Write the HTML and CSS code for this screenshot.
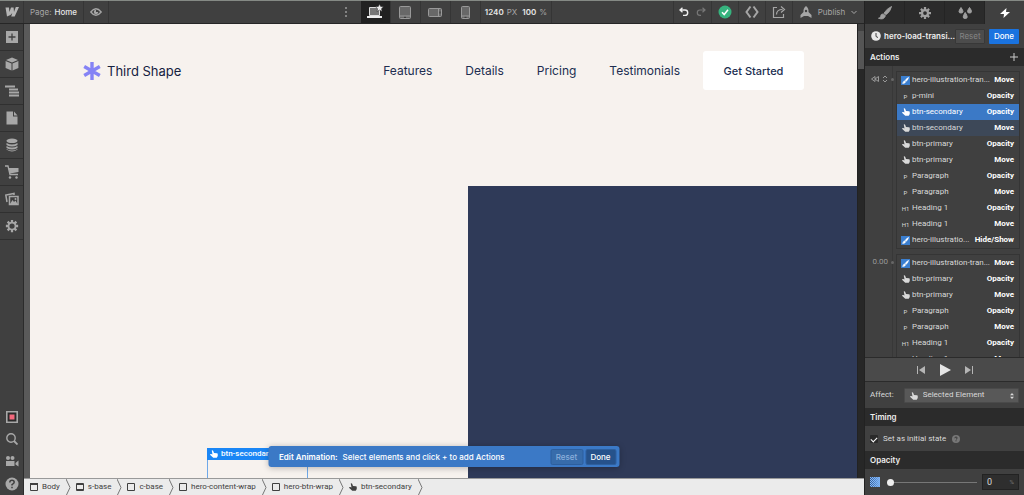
FILE: index.html
```html
<!DOCTYPE html>
<html lang="en">
<head>
<meta charset="utf-8">
<title>Designer</title>
<link rel="stylesheet" href="styles.css">
</head>
<body>
<svg class="defs" aria-hidden="true">
  <symbol id="hand" viewBox="0 0 16 16"><path d="M3.500 1q2-1 3 1L8 6l6 .5q1.500.3 1.500 2V12l-2 3.500h-7L0 9.500q.5-2 2.500-1.300L5 9z" fill="currentColor"/></symbol>
  <symbol id="brush" viewBox="0 0 16 16"><path d="M15.500.5Q10 3 7 8l2 2q5-3 6.500-9.500zM6 9Q3 9 3 12q-.5 2-2.500 2 6 2.500 8-3z" fill="currentColor" stroke="currentColor"/></symbol>
  <symbol id="gear" viewBox="0 0 16 16"><path fill="none" stroke="currentColor" stroke-width="3" d="M8 0v4M8 12v4M0 8h4M12 8h4M2.500 2.500l2.500 2.500M11 11l2.500 2.500M13.500 2.500L11 5M5 11l-2.500 2.500"/><circle cx="8" cy="8" r="4" fill="none" stroke="currentColor" stroke-width="3"/></symbol>
  <symbol id="box" viewBox="0 0 8 8"><path d="M.5.5h7v7h-7z" fill="none" stroke="currentColor"/></symbol>
  <symbol id="sep" viewBox="0 0 5 17"><path d="M0 0l4 8.500L0 17" fill="none" stroke="#777" /></symbol>
</svg>
<div class="app">
  <div class="workspace">
    <header class="topbar">
      <button class="logo" aria-label="Menu"><svg class="i14" viewBox="0 0 14 14"><path d="M14 2L9.700 11.500H6.200L7.300 8Q5.500 11 2 11.500L.5 2.500H4L4.400 7 6 2.500h2.600L9 7l1.800-5z" fill="currentColor"/></svg></button>
      <button class="page">Page: <b>Home</b></button>
      <button class="cell eye" aria-label="Preview"><svg class="i12" viewBox="0 0 12 12"><path d="M.8 6q5-6.500 10.400 0-5.400 6.500-10.400 0z" fill="none" stroke="currentColor" stroke-width="1.300"/><path d="M6 3.800a2.200 2.200 0 1 0 2.200 2.200H6z" fill="currentColor"/></svg></button>
      <span class="spacer wide"></span>
      <button class="dots" aria-label="More"><svg class="i12" viewBox="0 0 12 12"><path d="M6 1v2M6 5v2M6 9v2" stroke="currentColor" stroke-width="1.500"/></svg></button>
      <button class="device on" aria-label="Desktop"><svg class="laptop" viewBox="0 0 18 16"><path d="M3.500 3.500h10v8h-10z" fill="#777" stroke="#ddd"/><path d="M1 12h15v2H1z" fill="#eee"/><path d="M13.500 0l1.200 2.500 2.800.3-2 1.900.6 2.800-2.600-1.400-2.500 1.400.6-2.800-2-1.900 2.700-.3z" fill="#eee" stroke="#222" stroke-width=".5"/></svg></button>
      <button class="device" aria-label="Tablet"><svg class="i14" viewBox="0 0 14 14"><rect x="1.500" y="1.500" width="11" height="12" rx="1" fill="#686868" stroke="#999"/><path d="M1 11h12" stroke="#999"/><path d="M6 12.300h2" stroke="#333"/></svg></button>
      <button class="device" aria-label="Mobile landscape"><svg class="i14" viewBox="0 0 14 14"><rect x=".5" y="3.500" width="13" height="8" rx="1" fill="#686868" stroke="#999"/><path d="M10.500 3v9" stroke="#999"/><path d="M12 6.500v2" stroke="#333"/></svg></button>
      <button class="device" aria-label="Mobile portrait"><svg class="i14" viewBox="0 0 14 14"><rect x="3.500" y="1.500" width="8" height="12" rx="1" fill="#686868" stroke="#999"/><path d="M3 11h9" stroke="#999"/><path d="M6.500 12.300h2" stroke="#333"/></svg></button>
      <button class="size"><b>1240</b> PX <b class="pct">100</b> %</button>
      <span class="spacer narrow"></span>
      <div class="undo">
        <button class="lit" aria-label="Undo"><svg class="i10" viewBox="0 0 10 10"><path d="M3.500.8L1 3l2.500 2.200M1 3h5a2.700 2.700 0 0 1 0 5.400H4" fill="none" stroke="currentColor" stroke-width="1.400"/></svg></button>
        <button class="dim" aria-label="Redo"><svg class="i10" viewBox="0 0 10 10"><path d="M6.500.8L9 3 6.500 5.200M9 3H4a2.700 2.700 0 0 0 0 5.400h1" fill="none" stroke="currentColor" stroke-width="1.200"/></svg></button>
      </div>
      <button class="act" aria-label="Saved"><svg class="i14" viewBox="0 0 14 14"><circle cx="7" cy="7" r="6.500" fill="#36b37e"/><path d="M4 7.200l2.200 2.300L10 4.800" fill="none" stroke="#fff" stroke-width="1.500"/></svg></button>
      <button class="act" aria-label="Code"><svg class="i14" viewBox="0 0 14 14"><path d="M5.500 1.500L1.500 7l4 5.500M8.500 1.500l4 5.500-4 5.500" fill="none" stroke="currentColor" stroke-width="2"/></svg></button>
      <button class="act" aria-label="Share"><svg class="i14" viewBox="0 0 14 14"><path d="M5 2.500H1.500v10h10V9M4.500 9.500q0-5 6-5M9 1.500l3.500 3L9 7.500" fill="none" stroke="currentColor" stroke-width="1.200"/></svg></button>
      <button class="publish"><svg class="i12" viewBox="0 0 12 12"><path d="M6 0q3 2.500 2.500 6L11.500 9v3L8 10H4L.5 12V9l3-3Q3 2.500 6 0z" fill="currentColor"/><circle cx="6" cy="5" r="1.200" fill="#404040"/></svg><span>Publish</span><svg class="i6" viewBox="0 0 6 6"><path d="M.5 2L3 4.500 5.500 2" fill="none" stroke="currentColor"/></svg></button>
    </header>
    <div class="middle">
      <nav class="rail" aria-label="Tools">
        <button aria-label="Add"><svg class="i12" viewBox="0 0 12 12"><path d="M0 0h12v12H0z" fill="currentColor"/><path d="M6 2.500v7M2.500 6h7" stroke="#404040" stroke-width="1.300"/></svg></button>
        <button aria-label="Symbols"><svg class="i14" viewBox="0 0 14 14"><path d="M7 .5L13 3 7 5.500 1 3zM.6 4L6.500 6.500v7L.6 11zM13.400 4L7.500 6.500v7l5.900-2.500z" fill="currentColor"/></svg></button>
        <button aria-label="Navigator"><svg class="i14" viewBox="0 0 14 14"><path d="M0 2.500h10M4 5.500h9M4 8.500h10M4 11.500h10" stroke="currentColor" stroke-width="1.800"/></svg></button>
        <button aria-label="Pages"><svg class="i14" viewBox="0 0 14 14"><path d="M1.500.5H8V5.500h4.500v8h-11zM9 .5l3.500 4H9z" fill="currentColor"/></svg></button>
        <button aria-label="CMS"><svg class="i14" viewBox="0 0 14 14"><ellipse cx="7" cy="2.800" rx="5.500" ry="2.300" fill="currentColor"/><path d="M1.500 5q5.500 3 11 0v2q-5.500 3.200-11 0zM1.500 8q5.500 3 11 0v2q-5.500 3.200-11 0zM1.500 11q5.500 3 11 0v.5q-5.500 4-11 0z" fill="currentColor"/></svg></button>
        <button aria-label="Ecommerce"><svg class="i14" viewBox="0 0 14 14"><path d="M0 1h3l2 8.500h8" fill="none" stroke="currentColor" stroke-width="1.300"/><path d="M3.500 3H13.500v4L5 8.500z" fill="currentColor"/><circle cx="5" cy="12.500" r="1.200" fill="currentColor"/><circle cx="11.500" cy="12.500" r="1.200" fill="currentColor"/></svg></button>
        <button aria-label="Assets"><svg class="i14" viewBox="0 0 14 14"><path d="M2 10L.8 3 9 1.500V3" fill="none" stroke="currentColor" stroke-width="1.500"/><path d="M4.500 4.500h8.500v8H4.500z" fill="none" stroke="currentColor" stroke-width="1.500"/><path d="M5 12l2.500-4L9 10l1.500-1.500 2 3.500z" fill="currentColor"/><circle cx="10.500" cy="7" r="1" fill="currentColor"/></svg></button>
        <button aria-label="Settings"><svg class="i14" viewBox="0 0 16 16"><path fill="none" stroke="currentColor" stroke-width="2.600" d="M8 1v3M8 12v3M1 8h3M12 8h3M3 3l2 2M11 11l2 2M13 3l-2 2M5 11l-2 2"/><circle cx="8" cy="8" r="4" fill="none" stroke="currentColor" stroke-width="2"/></svg></button>
        <span class="spacer"></span>
        <button class="low" aria-label="Record"><svg class="i12" viewBox="0 0 12 12"><path d="M.8.800h10.400v10.400H.8z" fill="#2b2b2b" stroke="currentColor" stroke-width="1.600"/><path d="M3.500 3.500h5v5h-5z" fill="#f3687c"/></svg></button>
        <button class="low" aria-label="Search"><svg class="i12" viewBox="0 0 12 12"><circle cx="5" cy="5" r="4.200" fill="none" stroke="currentColor" stroke-width="1.400"/><path d="M8 8l3.500 3.500" stroke="currentColor" stroke-width="1.800"/></svg></button>
        <button class="low" aria-label="Video help"><svg class="i14" viewBox="0 0 14 14"><circle cx="3" cy="4" r="2" fill="currentColor"/><circle cx="7.500" cy="4" r="2" fill="currentColor"/><path d="M1 7h8.500v5H1zM10.500 9L13.500 6.500v6L10.500 10.500z" fill="currentColor"/></svg></button>
        <button class="low" aria-label="Help"><svg class="i14" viewBox="0 0 14 14"><circle cx="7" cy="7" r="6.500" fill="currentColor"/><path d="M4.800 5.500q0-2.200 2.200-2.200t2.200 2Q9.200 6.500 7 7.600v1M7 9.800v1.500" fill="none" stroke="#404040" stroke-width="1.500"/></svg></button>
      </nav>
      <div class="stage">
        <div class="view">
          <main class="canvas">
            <div class="site-head">
              <a class="brand" href="#"><svg class="star" viewBox="0 0 18 18"><path d="M9 0v18M1.200 4.500l15.600 9M16.800 4.500l-15.600 9" stroke="#8583f5" stroke-width="3.400"/></svg>Third Shape</a>
              <nav class="site-nav"><a href="#">Features</a><a href="#">Details</a><a href="#">Pricing</a><a href="#">Testimonials</a></nav>
              <a class="cta" href="#">Get Started</a>
            </div>
            <div class="hero"><div class="hero-art"></div></div>
            <div class="selection"><span class="tag"><svg class="i8"><use href="#hand"/></svg>btn-secondary</span></div>
            <div class="toast"><b>Edit Animation:</b><span>Select elements and click + to add Actions</span><button class="t-reset">Reset</button><button class="t-done">Done</button></div>
          </main>
          <div class="scroll"><span class="up"></span><span class="thumb"></span></div>
        </div>
        <nav class="crumbs" aria-label="Breadcrumb">
          <a href="#"><svg class="i8"><use href="#box"/><path d="M0 1h8" stroke="currentColor" stroke-width="2"/></svg>Body</a><svg class="sep"><use href="#sep"/></svg>
          <a href="#"><svg class="i8"><use href="#box"/><path d="M0 1.500h8M0 6.500h8" stroke="currentColor"/></svg>s-base</a><svg class="sep"><use href="#sep"/></svg>
          <a href="#"><svg class="i8"><use href="#box"/></svg>c-base</a><svg class="sep"><use href="#sep"/></svg>
          <a href="#"><svg class="i8"><use href="#box"/></svg>hero-content-wrap</a><svg class="sep"><use href="#sep"/></svg>
          <a href="#"><svg class="i8"><use href="#box"/></svg>hero-btn-wrap</a><svg class="sep"><use href="#sep"/></svg>
          <a href="#"><svg class="i8"><use href="#hand"/></svg>btn-secondary</a><svg class="sep"><use href="#sep"/></svg>
        </nav>
      </div>
    </div>
  </div>
  <aside class="panel">
    <div class="tabs">
      <button aria-label="Style"><svg class="i14"><use href="#brush"/></svg></button>
      <button aria-label="Settings"><svg class="i12"><use href="#gear"/></svg></button>
      <button aria-label="Style manager"><svg class="i14" viewBox="0 0 14 14"><path d="M3 1.500q4 5.500 0 5.500t0-5.500zM11.500 1.500q4 5.500 0 5.500t0-5.500zM7.200 6.500q4 6 0 6t0-6z" fill="currentColor" stroke="currentColor"/></svg></button>
      <button class="on" aria-label="Interactions"><svg class="i12" viewBox="0 0 12 12"><path d="M7.500 1L1 7h4L4.500 11 11 5H7z" fill="currentColor"/></svg></button>
    </div>
    <div class="anim">
      <svg class="i10" viewBox="0 0 10 10"><circle cx="5" cy="5" r="4.800" fill="#e8e8e8"/><path d="M5 2v3.500l2 1" fill="none" stroke="#404040"/></svg>
      <b>hero-load-transi...</b><button class="reset">Reset</button><button class="done">Done</button>
    </div>
    <div class="head">Actions<button class="plus" aria-label="Add action"><svg class="i8" viewBox="0 0 8 8"><path d="M4 0v8M0 4h8" stroke="currentColor"/></svg></button></div>
    <div class="list">
      <div class="block">
        <div class="time"><svg class="i8" viewBox="0 0 8 8"><path d="M4 1.500L.5 4 4 6.500zM7.500 1.500L4 4l3.500 2.500z" fill="none" stroke="currentColor"/></svg><svg class="i6" viewBox="0 0 6 6"><path d="M1 2l2-2 2 2M1 4l2 2 2-2" fill="none" stroke="currentColor"/></svg><i></i></div>
        <ul>
          <li><span class="ic blue"><svg class="i8"><use href="#brush"/></svg></span><span class="nm">hero-illustration-tran...</span><b>Move</b></li>
          <li><span class="ic">P</span><span class="nm">p-mini</span><b>Opacity</b></li>
          <li class="sel"><span class="ic"><svg class="i8"><use href="#hand"/></svg></span><span class="nm">btn-secondary</span><b>Opacity</b></li>
          <li class="rel"><span class="ic"><svg class="i8"><use href="#hand"/></svg></span><span class="nm">btn-secondary</span><b>Move</b></li>
          <li><span class="ic"><svg class="i8"><use href="#hand"/></svg></span><span class="nm">btn-primary</span><b>Opacity</b></li>
          <li><span class="ic"><svg class="i8"><use href="#hand"/></svg></span><span class="nm">btn-primary</span><b>Move</b></li>
          <li><span class="ic">P</span><span class="nm">Paragraph</span><b>Opacity</b></li>
          <li><span class="ic">P</span><span class="nm">Paragraph</span><b>Move</b></li>
          <li><span class="ic">H1</span><span class="nm">Heading 1</span><b>Opacity</b></li>
          <li><span class="ic">H1</span><span class="nm">Heading 1</span><b>Move</b></li>
          <li><span class="ic blue"><svg class="i8"><use href="#brush"/></svg></span><span class="nm">hero-illustratio...</span><b>Hide/Show</b></li>
        </ul>
      </div>
      <div class="block">
        <div class="time">0.00<i></i></div>
        <ul>
          <li><span class="ic blue"><svg class="i8"><use href="#brush"/></svg></span><span class="nm">hero-illustration-tran...</span><b>Move</b></li>
          <li><span class="ic"><svg class="i8"><use href="#hand"/></svg></span><span class="nm">btn-primary</span><b>Opacity</b></li>
          <li><span class="ic"><svg class="i8"><use href="#hand"/></svg></span><span class="nm">btn-primary</span><b>Move</b></li>
          <li><span class="ic">P</span><span class="nm">Paragraph</span><b>Opacity</b></li>
          <li><span class="ic">P</span><span class="nm">Paragraph</span><b>Move</b></li>
          <li><span class="ic">H1</span><span class="nm">Heading 1</span><b>Opacity</b></li>
          <li><span class="ic">H1</span><span class="nm">Heading 1</span><b>Move</b></li>
        </ul>
      </div>
    </div>
    <div class="player">
      <button aria-label="First"><svg class="i10" viewBox="0 0 10 10"><path d="M1.500 1v8" stroke="currentColor"/><path d="M9 1v8L3 5z" fill="currentColor"/></svg></button>
      <button class="play" aria-label="Play"><svg class="i12" viewBox="0 0 12 12"><path d="M1 0l11 6-11 6z" fill="currentColor"/></svg></button>
      <button aria-label="Last"><svg class="i10" viewBox="0 0 10 10"><path d="M8.500 1v8" stroke="currentColor"/><path d="M1 1v8l6-4z" fill="currentColor"/></svg></button>
    </div>
    <div class="row affect"><label for="affect">Affect:</label>
      <span class="pick"><svg class="i8 left"><use href="#hand"/></svg><select id="affect"><option>Selected Element</option></select><svg class="i6 right" viewBox="0 0 6 6"><path d="M3 0l2 2.300H1zM3 6l2-2.300H1z" fill="currentColor"/></svg></span></div>
    <div class="head">Timing</div>
    <div class="row"><input type="checkbox" id="init" checked><label for="init">Set as initial state</label><svg class="i8 q" viewBox="0 0 8 8"><circle cx="4" cy="4" r="4" fill="#777"/><path d="M2.800 3.200q0-1.200 1.200-1.200t1.200 1Q5.200 3.700 4 4.400M4 5.300v1" fill="none" stroke="#333" stroke-width=".9"/></svg></div>
    <div class="head">Opacity</div>
    <div class="row op"><svg class="swatch" viewBox="0 0 10 10"><defs><linearGradient id="fade"><stop offset="0" stop-color="#6ba6ee" stop-opacity="0"/><stop offset="1" stop-color="#7db2f4"/></linearGradient><pattern id="chk" width="2" height="2" patternUnits="userSpaceOnUse"><path d="M0 0h2v2H0z" fill="#2c5590"/><path d="M0 0h1v1H0zM1 1h1v1H1z" fill="#8fbdf5"/></pattern></defs><path d="M0 0h10v10H0z" fill="url(#chk)"/><path d="M0 0h10v10H0z" fill="url(#fade)"/></svg>
      <input type="range" aria-label="Opacity" min="0" max="100" value="0"><span class="num"><input type="text" aria-label="Opacity value" value="0"><small>%</small></span></div>
  </aside>
</div>
</body>
</html>
```
FILE: styles.css
```css
* { box-sizing: border-box; }
body { margin: 0; font: 8px/12px Inter, "Liberation Sans", sans-serif; color: #d9d9d9; background: #404040; }
button, input, select { font: inherit; color: inherit; margin: 0; padding: 0; border: 0; background: none; }
button { display: flex; align-items: center; justify-content: center; }
a { color: inherit; text-decoration: none; }
b { font-weight: 600; }
svg { display: block; flex: none; }
.defs { position: absolute; width: 0; height: 0; }
.i6 { width: 6px; height: 6px; }
.i8 { width: 8px; height: 8px; }
.i10 { width: 10px; height: 10px; }
.i12 { width: 12px; height: 12px; }
.i14 { width: 14px; height: 14px; }
.spacer { flex: 1; }
.spacer.wide { flex: 11; }
.spacer.narrow { flex: 6; }
.app { display: flex; height: 100vh; border-top: 1px solid #858a85; overflow: hidden; }
.workspace { flex: 1; min-width: 0; display: flex; flex-direction: column; }

.topbar { height: 23px; flex: none; display: flex; border-bottom: 1px solid #262626; color: #a6a6a6; }
.topbar > button, .undo { border-right: 1px solid #353535; }
.topbar .logo { width: 24px; color: #b5b5b5; }
.topbar .page { width: 60px; gap: 3px; }
.page b { color: #e6e6e6; font-weight: 500; }
.cell { width: 25px; }
.topbar .dots { width: 30px; color: #999; border: 0; }
.device { width: 30px; }
.device.on { background: #212121; }
.laptop { width: 18px; height: 16px; }
.topbar .size { width: 71px; gap: 3px; }
.size b { color: #e6e6e6; }
.pct { margin-left: 2px; }
.undo { display: flex; width: 39px; justify-content: center; gap: 7px; border-left: 1px solid #353535; }
.lit { color: #eee; }
.dim { color: #777; }
.act { width: 27px; }
.topbar .publish { width: 71px; gap: 6px; border: 0; }

.middle { flex: 1; min-height: 0; display: flex; }
.rail { width: 24px; flex: none; display: flex; flex-direction: column; color: #a8a8a8; border-right: 1px solid #2b2b2b; }
.rail button { height: 27px; border-bottom: 1px solid #303030; }
.rail .low { height: 22px; border: 0; }
.rail .low:last-child { height: 23px; }
.stage { flex: 1; min-width: 0; display: flex; flex-direction: column; }
.view { flex: 1; min-height: 0; display: flex; padding-left: 6px; background: #5a5a5a; }
.canvas { position: relative; flex: 1; min-width: 0; display: flex; flex-direction: column; background: #f7f2ee; color: #202d50; overflow: hidden; }
.site-head { display: flex; align-items: center; padding: 27px 53px 0; font-size: 12px; line-height: 18px; }
.brand { display: flex; align-items: center; gap: 6px; flex: 1; font-size: 13px; color: #16213f; }
.star { width: 18px; height: 18px; }
.site-nav { display: flex; gap: 33px; margin-right: 23px; }
.cta { display: flex; align-items: center; justify-content: center; width: 101px; height: 39px; border-radius: 3px; background: #fff; font-size: 11px; font-weight: 500; }
.hero { flex: 1; display: grid; grid-template-columns: 53fr 47fr; padding-top: 96px; }
.hero-art { grid-column: 2; background: #2f3a58; }
.selection { position: absolute; left: 177px; bottom: 0; width: 101px; height: 30px; border: 1px solid #6fa8e8; border-bottom: 0; }
.tag { display: flex; align-items: center; gap: 3px; height: 12px; padding-left: 3px; margin: -1px; background: #1a86f5; color: #fff; font-weight: 500; white-space: nowrap; }
.toast { position: absolute; left: 50%; bottom: 11px; transform: translateX(-50%); display: flex; align-items: center; width: 351px; height: 21px; padding: 0 3px 0 11px; gap: 5px; border-radius: 3px; background: #3b79c6; color: #fff; font-weight: 500; box-shadow: 0 1px 6px #0004; white-space: nowrap; }
.toast span { flex: 1; }
.toast button { height: 16px; border: 1px solid #2d5f9e; border-radius: 2px; }
.toast .t-reset { width: 33px; background: #376cab; color: #8cb0dc; margin-right: -3px; }
.toast .t-done { width: 31px; background: #26528b; }
.scroll { width: 7px; display: flex; flex-direction: column; background: #272727; border-left: 1px solid #222; }
.up { height: 7px; background: #404040; }
.thumb { height: 38px; background: #555; }
.crumbs, .list, .row, .tag { font-family: Roboto, "Liberation Sans", sans-serif; }
.crumbs { height: 17px; flex: none; display: flex; align-items: center; border-top: 1px solid #999; background: #ebebeb; color: #404040; padding-left: 1px; }
.crumbs a { display: flex; align-items: center; gap: 4px; padding: 0 6px 0 5px; white-space: nowrap; }
.sep { width: 5px; height: 17px; }

.panel { width: 160px; flex: none; display: flex; flex-direction: column; border-left: 1px solid #222; }
.tabs { height: 23px; flex: none; display: flex; background: #2b2b2b; color: #a0a0a0; }
.tabs button { flex: 1; border-right: 1px solid #242424; }
.tabs .on { background: #404040; color: #fff; border: 0; }
.anim { height: 24px; flex: none; display: flex; align-items: center; padding: 0 5px 0 6px; color: #eee; }
.anim b { margin-left: 3px; flex: 1; min-width: 0; white-space: nowrap; }
.anim button { height: 15px; border-radius: 1px; flex: none; }
.anim .reset { width: 30px; background: #4c4c4c; border: 1px solid #383838; color: #848484; margin-right: 4px; }
.anim .done { width: 30px; background: #1a73e0; color: #fff; font-weight: 500; }
.head { height: 18px; flex: none; display: flex; align-items: center; justify-content: space-between; padding: 0 6px 0 5px; background: #2b2b2b; color: #eee; font-weight: 600; }
.plus { color: #ccc; }
.list { flex: 1; min-height: 0; overflow: hidden; display: flex; flex-direction: column; gap: 5px; padding-top: 5px; background: linear-gradient(90deg, transparent 27px, #383838 27px, #383838 28px, transparent 28px); }
.block { display: flex; flex: none; }
.time { width: 31px; height: 16px; flex: none; display: flex; align-items: center; justify-content: flex-end; gap: 3px; padding-right: 2px; color: #999; }
.time i { width: 3px; height: 3px; border-radius: 50%; background: #666; }
ul { flex: 1; min-width: 0; list-style: none; margin: 0 4px 0 0; padding: 0; border: 1px solid #353535; }
li { display: flex; align-items: center; height: 16px; padding-right: 5px; white-space: nowrap; }
li b { color: #fff; font-weight: 700; }
.nm { flex: 1; min-width: 0; }
.ic { width: 9px; height: 9px; margin: 0 2px 0 4px; display: flex; align-items: center; justify-content: center; font-size: 6px; line-height: 9px; }
.blue { background: #3b7fd0; color: #fff; }
.blue svg { width: 7px; height: 7px; }
.sel { background: #3b79c6; color: #fff; }
.rel { background: #3d4858; }
.player { height: 25px; flex: none; display: flex; align-items: center; justify-content: center; gap: 13px; background: #4a4a4a; border-top: 1px solid #2b2b2b; border-bottom: 1px solid #2b2b2b; color: #b5b5b5; }
.play { color: #e5e5e5; }
.row { height: 25px; flex: none; display: flex; align-items: center; padding: 0 5px; }
.affect { height: 26px; gap: 10px; }
.pick { position: relative; flex: 1; display: flex; }
.pick select { appearance: none; width: 100%; height: 15px; padding-left: 18px; border: 1px solid #4a4a4a; border-radius: 1px; background: #585858; }
.left { position: absolute; left: 6px; top: 4px; }
.right { position: absolute; right: 4px; top: 5px; }
input[type="checkbox"] { appearance: none; width: 8px; height: 8px; border-radius: 1px; background: #2a2a2a; margin-right: 5px; display: grid; place-items: center; }
input[type="checkbox"]:checked::before { content: ""; width: 5px; height: 3px; border: solid #fff; border-width: 0 0 1px 1px; transform: rotate(-45deg); }
.q { margin-left: 6px; }
.swatch { width: 10px; height: 10px; margin-right: 7px; }
.op { height: 26px; }
input[type="range"] { appearance: none; flex: 1; min-width: 0; height: 7px; background: linear-gradient(#777, #777) center / 100% 1px no-repeat; }
input[type="range"]::-webkit-slider-thumb { appearance: none; width: 7px; height: 7px; border-radius: 50%; background: #eee; }
.num { display: flex; align-items: center; width: 37px; height: 16px; margin-left: 5px; padding: 0 4px; border: 1px solid #222; background: #2e2e2e; }
.num input { flex: 1; min-width: 0; width: 0; font-size: 9px; }
.num small { font-size: 6px; color: #777; }
```
